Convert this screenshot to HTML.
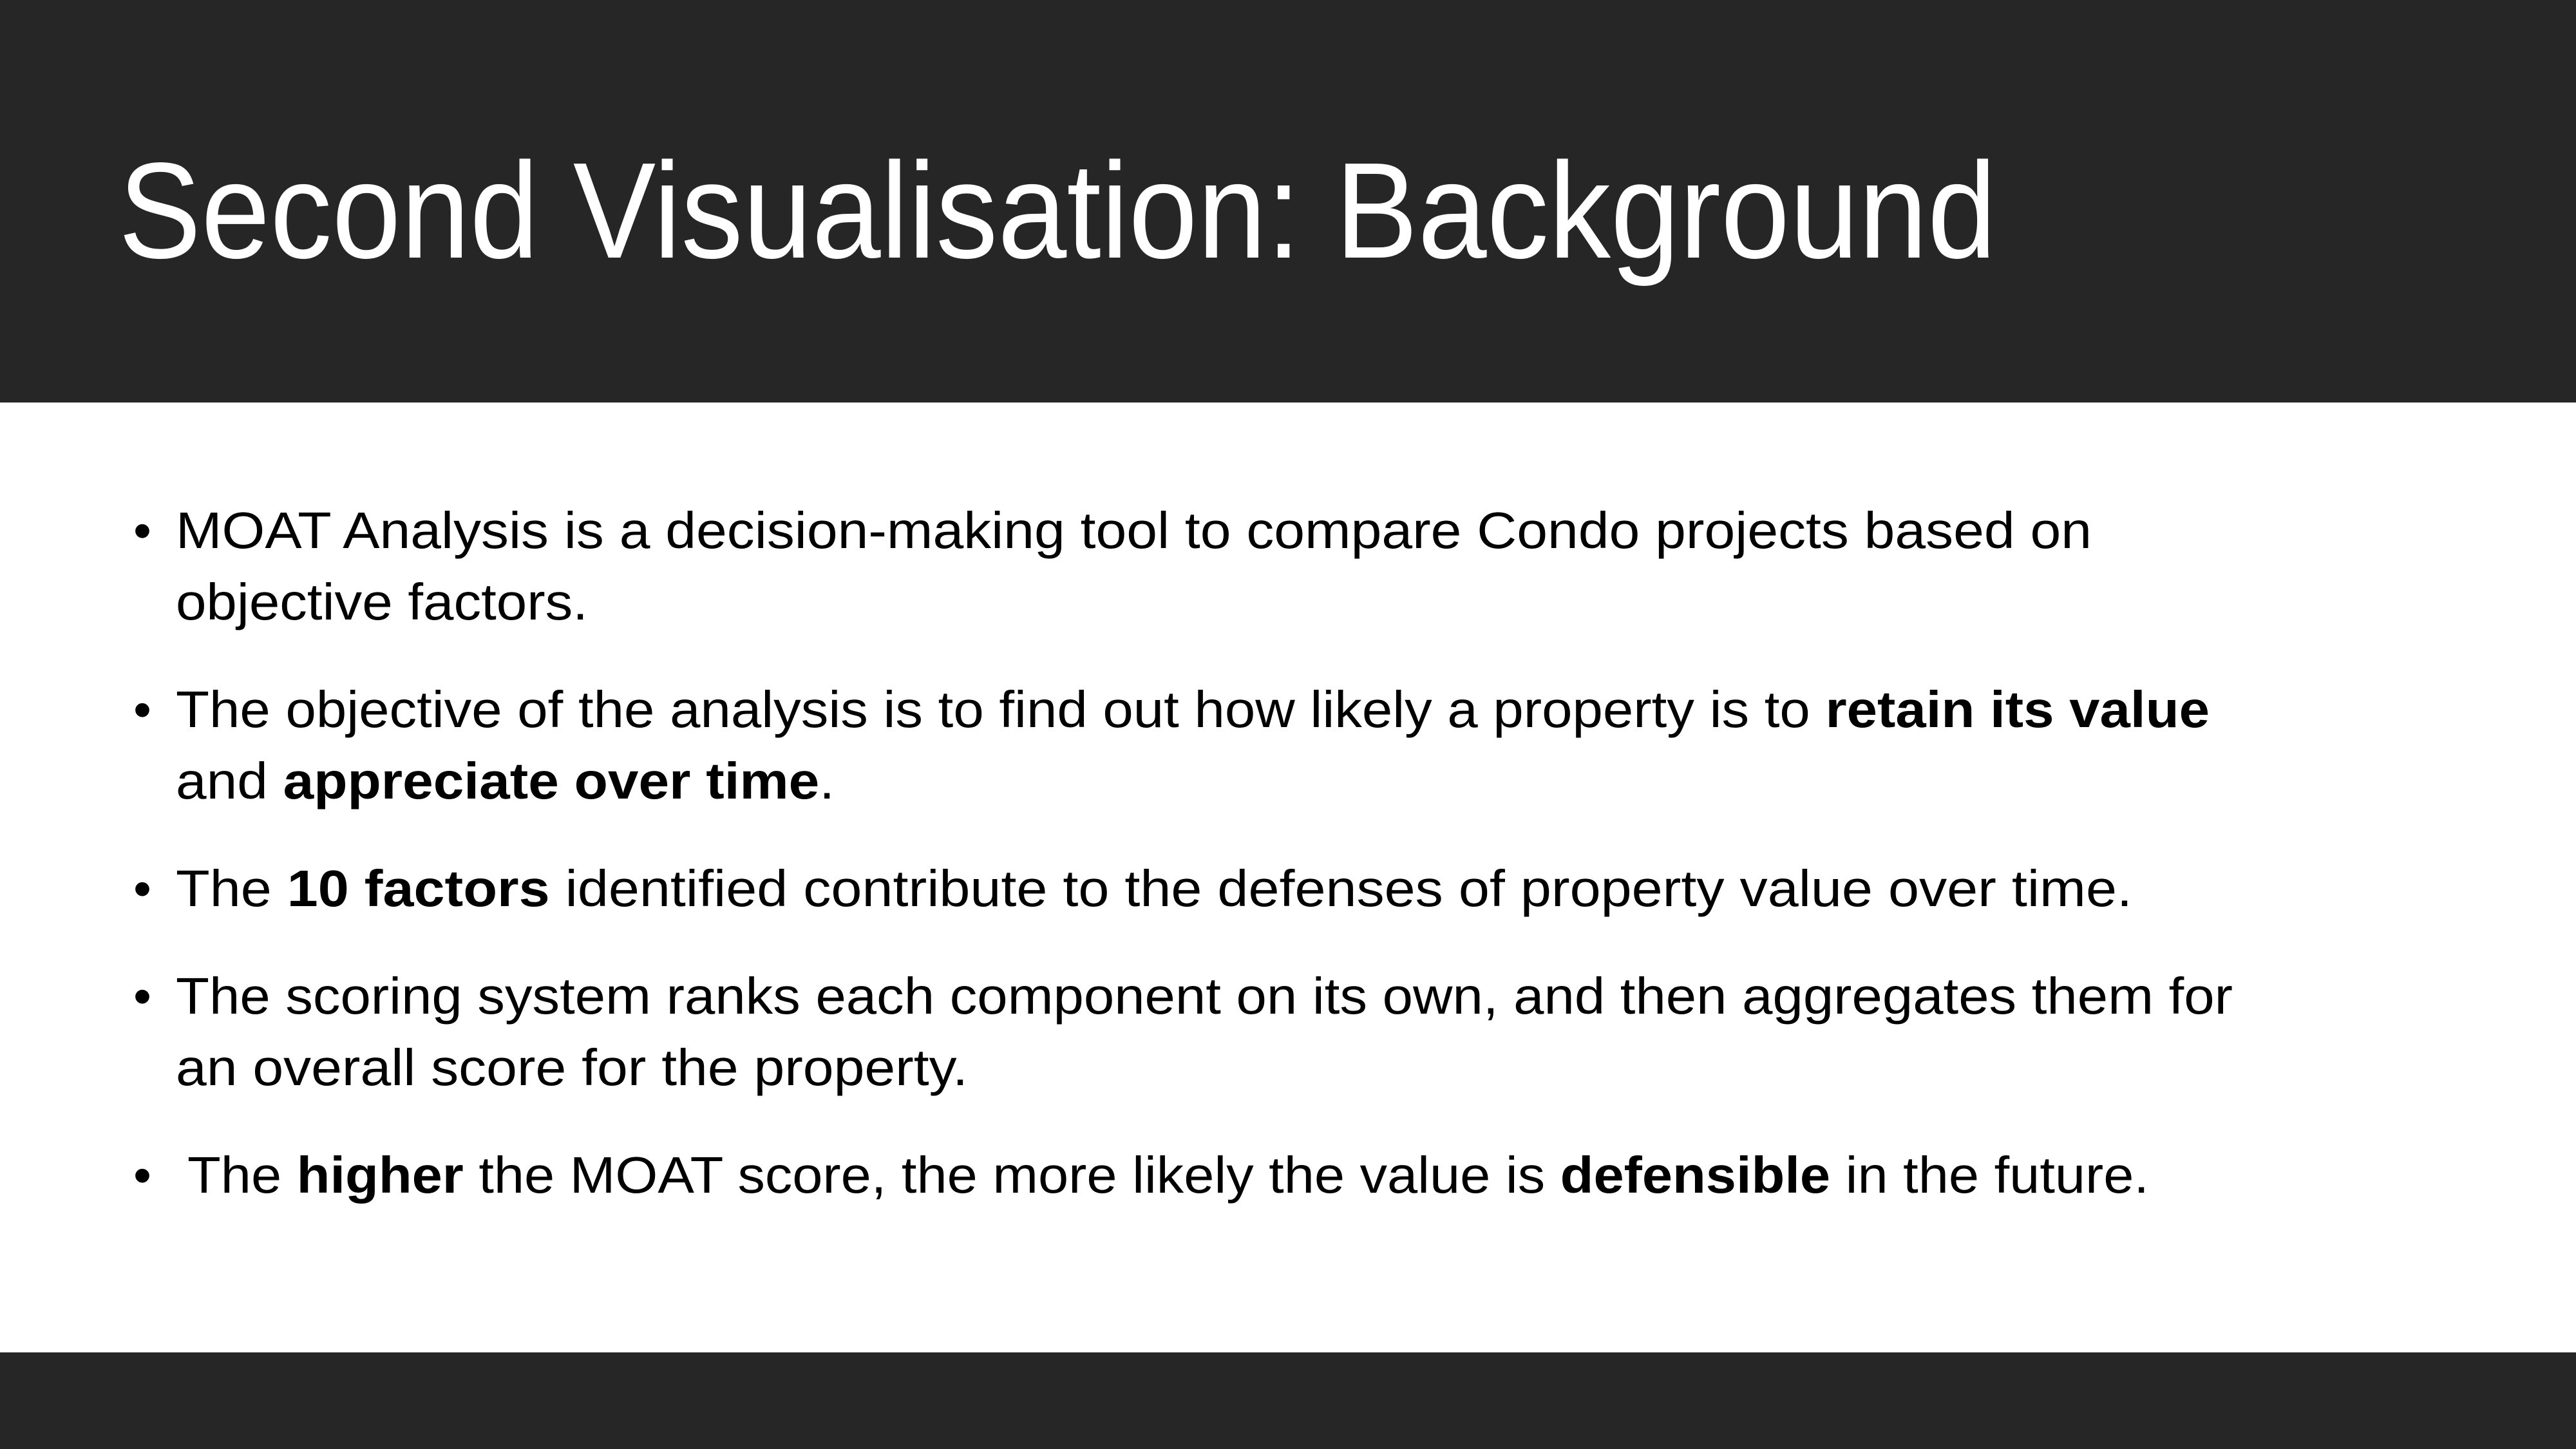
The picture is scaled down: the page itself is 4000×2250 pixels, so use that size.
<!DOCTYPE html>
<html><head><meta charset="utf-8"><style>
html,body{margin:0;padding:0;background:#fff;}
svg{display:block;}
</style></head><body>
<svg width="4000" height="2250" viewBox="0 0 4000 2250" xmlns="http://www.w3.org/2000/svg" font-family="Liberation Sans, DejaVu Sans, sans-serif">
<rect x="0" y="0" width="4000" height="625" fill="#262626"/>
<rect x="0" y="2100" width="4000" height="150" fill="#262626"/>
<text x="184" y="400" font-size="212" fill="#ffffff" textLength="2916" lengthAdjust="spacingAndGlyphs">Second Visualisation: Background</text>
<g font-size="80" fill="#000">
<text x="207" y="851">•</text>
<text x="273" y="851" textLength="2975" lengthAdjust="spacingAndGlyphs">MOAT Analysis is a decision-making tool to compare Condo projects based on</text>
<text x="273" y="962" textLength="640" lengthAdjust="spacingAndGlyphs">objective factors.</text>
<text x="207" y="1129">•</text>
<text x="273" y="1129" textLength="3158" lengthAdjust="spacingAndGlyphs">The objective of the analysis is to find out how likely a property is to <tspan font-weight="bold">retain its value</tspan></text>
<text x="273" y="1240" textLength="1023" lengthAdjust="spacingAndGlyphs">and <tspan font-weight="bold">appreciate over time</tspan>.</text>
<text x="207" y="1407">•</text>
<text x="273" y="1407" textLength="3038" lengthAdjust="spacingAndGlyphs">The <tspan font-weight="bold">10 factors</tspan> identified contribute to the defenses of property value over time.</text>
<text x="207" y="1574">•</text>
<text x="273" y="1574" textLength="3194" lengthAdjust="spacingAndGlyphs">The scoring system ranks each component on its own, and then aggregates them for</text>
<text x="273" y="1685" textLength="1230" lengthAdjust="spacingAndGlyphs">an overall score for the property.</text>
<text x="207" y="1852">•</text>
<text x="291" y="1852" textLength="3046" lengthAdjust="spacingAndGlyphs">The <tspan font-weight="bold">higher</tspan> the MOAT score, the more likely the value is <tspan font-weight="bold">defensible</tspan> in the future.</text>
</g>
</svg>
</body></html>
